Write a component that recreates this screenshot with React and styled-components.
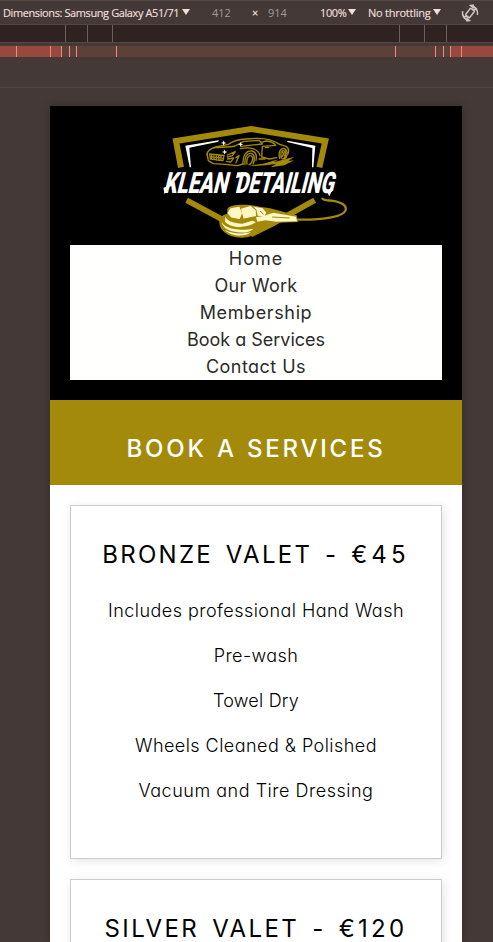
import React from "react";
import styled, { createGlobalStyle } from "styled-components";

const GlobalStyle = createGlobalStyle`
  *, *::before, *::after { box-sizing: border-box; }
  body { margin: 0; background: #443937; overflow: hidden; }
`;

const gold = "#a38a0b";

const Window = styled.div`
  width: 493px;
  height: 942px;
  overflow: hidden;
  display: flex;
  flex-direction: column;
  background: #443937;
  font-family: Inter, sans-serif;
`;

/* ---- device toolbar ---- */

const Toolbar = styled.div`
  flex: none;
  height: 25px;
  display: flex;
  align-items: center;
  padding: 0 0 0 3px;
  border-top: 1px solid #54453f;
  border-bottom: 1px solid #534744;
  background: #443937;
  font: 400 11px/16px "Open Sans", "Noto Sans", sans-serif;
  white-space: nowrap;
`;

const ToolLabel = styled.span`
  flex: none;
  width: ${(p) => p.$width}px;
  color: ${(p) => (p.$muted ? "#a39997" : "#f0dfdc")};
  letter-spacing: ${(p) => p.$spacing || 0}px;
  -webkit-text-stroke: ${(p) => (p.$muted ? 0 : 0.15)}px currentColor;
`;

const Caret = styled.span`
  flex: none;
  width: 8px;
  height: 6px;
  margin: 0 ${(p) => p.$after}px 1px 2px;
  background: #f0dfdc;
  clip-path: polygon(0 0, 100% 0, 50% 100%);
`;

const RotateIcon = styled.svg`
  flex: none;
  width: 18px;
  height: 18px;
  display: block;
`;

/* ---- rulers ---- */

const Ruler = styled.div`
  flex: none;
  display: flex;
  height: 18px;
  background: #2f2221;
  border-bottom: 1px solid #534744;
`;

const RulerCell = styled.div`
  width: ${(p) => p.$width}px;
  height: 17px;
  border-left: ${(p) => (p.$first ? 0 : 1)}px solid #6b5f5c;
`;

const MediaBar = styled.div`
  flex: none;
  display: flex;
  height: 11px;
  margin-top: 3px;
`;

const MediaCell = styled.div`
  width: ${(p) => p.$width}px;
  border-left: ${(p) => (p.$first ? 0 : 1)}px solid #f28b7c;
  background: ${(p) => (p.$strong ? "#97483f" : "#5e403b")};
`;

const Stage = styled.div`
  flex: 1;
  min-height: 0;
  margin-top: 30px;
  border-top: 1px solid #504441;
  padding: 18px 31px 0 50px;
`;

/* ---- previewed page ---- */

const Device = styled.main`
  width: 412px;
  height: 836px;
  overflow: hidden;
  background: #fff;
  box-shadow: 0 0 8px rgba(0, 0, 0, 0.25);
  color: #000;
`;

const SiteHeader = styled.header`
  height: 294px;
  padding: 20px;
  background: #000;
  display: flex;
  flex-direction: column;
`;

const LogoSvg = styled.svg`
  display: block;
  width: 210px;
  height: 119px;
  margin: 0 auto;
  overflow: visible;
`;

const Nav = styled.nav`
  background: #fffffd;
  display: flex;
  flex-direction: column;
`;

const TextLine = styled.span`
  display: block;
  height: 27px;
  line-height: 27px;
  font-size: 18px;
  text-align: center;
  white-space: nowrap;
  font-feature-settings: "cv11";
  letter-spacing: ${(p) => p.$spacing}px;
`;

const NavLink = styled(TextLine)`
  color: #2b2b2b;
  font-weight: 400;
  line-height: 28px;
`;

const Banner = styled.section`
  height: 85px;
  padding-top: 31px;
  background: ${gold};
`;

const Heading = styled.h2`
  margin: 0;
  height: 36px;
  line-height: 36px;
  font-size: 24px;
  font-weight: ${(p) => p.$weight || 400};
  color: ${(p) => p.$color || "#000"};
  letter-spacing: ${(p) => p.$spacing}px;
  word-spacing: ${(p) => p.$gap || 0}px;
  text-align: center;
  white-space: nowrap;
`;

const Price = styled.span`
  letter-spacing: ${(p) => p.$spacing}px;
`;

const Cards = styled.section`
  padding: 20px;
  display: flex;
  flex-direction: column;
  gap: 20px;
`;

const Card = styled.article`
  flex: none;
  height: 354px;
  padding-top: 31px;
  border: 1px solid #ccc;
  background: #fff;
  box-shadow: 2px 2px 10px rgba(0, 0, 0, 0.1);
`;

const Features = styled.div`
  display: flex;
  flex-direction: column;
  gap: 18px;
  margin-top: 24px;
`;

const Feature = styled(TextLine)`
  font-weight: 300;
  line-height: 28px;
`;

const LogoWord = styled.text`
  font-family: Roboto, sans-serif;
  font-weight: 900;
  font-size: 88px;
  fill: #fff;
`;

function Logo() {
  return (
    <LogoSvg viewBox="3 33 630 357" aria-label="Klean Detailing">
      <g fill="none" stroke={gold}>
        <path strokeWidth="18" d="M93 157 L78 78 L303 42 L526 78 L508 157" />
        <path strokeWidth="17" d="M110 256 L224 317 M494 256 L365 328 L302 358" />
      </g>
      <path
        fill="#fff"
        d="M106 92 L206 76 L205 80 L118 98 L123 157 L119 157Z M412 77 L496 92 L490 157 L486 157 L487 99 L412 81Z"
      />
      <g fill="none" stroke={gold} strokeWidth="4" strokeLinecap="round" strokeLinejoin="round">
        <path d="M172 121 C169 110 181 100 198 96 L235 88 C250 78 267 73 287 72 L318 70 C346 69 371 76 389 88 L408 94 C415 98 417 108 414 117" />
        <path d="M190 98 C219 96 236 97 255 93 L281 79 L328 76 L337 87 L273 94" />
        <path d="M334 82 L348 78 C362 79 373 85 377 91 L337 94 L335 126 L358 132 L380 128" />
        <path d="M171 116 L175 137 L190 146 L225 148 L263 152 L279 147" />
        <path d="M179 117 L222 121 L219 137 L181 132Z M185 118 V132 M192 118 V134 M199 119 V135 M206 120 V136 M213 121 V136 M180 125 L220 130" />
        <path d="M232 120 L256 110 L247 122 L232 126 M233 132 L251 129 L243 141 L230 139 M258 128 L267 122 L258 143" />
        <path d="M279 148 C277 119 290 106 306 108 C318 111 321 121 318 136 M285 148 C283 127 291 114 303 115 C315 117 315 135 309 147 M291 147 C288 126 300 117 306 124 C312 132 303 149 297 149" />
        <path d="M389 130 C383 105 397 95 408 104 C415 113 412 127 403 132 M394 129 C389 109 399 102 406 110 C410 117 405 130 398 132 M397 111 L405 124 M406 108 L396 125" />
        <path d="M271 101 C301 95 326 102 330 122 M346 98 L356 97 M327 132 L345 132" />
      </g>
      <path
        fill={gold}
        d="M297 151 C328 149 348 145 369 137 L384 134 L371 142 L433 125 L415 138 L433 136 L403 151 L362 157 L378 147 L345 151 L315 153Z"
      />
      <path
        fill="#fff"
        d="M221 76 l2 6 6 2 -6 2 -2 6 -2 -6 -6 -2 6 -2Z M272 80 l2 6 6 2 -6 2 -2 6 -2 -6 -6 -2 6 -2Z M224 103 l2 6 6 2 -6 2 -2 6 -2 -6 -6 -2 6 -2Z"
      />
      <g transform="translate(40 235) skewX(-14)">
        <LogoWord x="0" y="0" textLength="190" lengthAdjust="spacingAndGlyphs">KLEAN</LogoWord>
        <LogoWord x="214" y="0" textLength="296" lengthAdjust="spacingAndGlyphs">DETAILING</LogoWord>
      </g>
      <path fill="#fff" d="M262 172 L284 172 L280 185 L258 189Z M530 229 L548 222 L538 244Z M44 238 L40 218 L54 214Z" />
      <path
        fill="none"
        stroke={gold}
        strokeWidth="7"
        d="M516 249 C520 257 531 256 544 257 C574 261 590 271 587 285 C582 304 526 315 442 314"
      />
      <path
        fill={gold}
        d="M232 281 C239 270 266 267 302 270 L329 275 L360 280 L440 301 L445 321 L380 323 L344 329 C325 355 304 370 273 368 C232 366 207 344 208 320 C210 303 220 300 232 296Z"
      />
      <g fill="#fff8c4">
        <path d="M242 280 L268 275 L276 295 L269 313 L245 309 L232 294Z M273 281 L301 273 L317 285 L318 303 L281 311 L277 298Z M309 275 L338 280 L349 293 L343 304 L323 302 L319 283Z" />
        <path d="M340 303 L370 293 L413 301 L438 305 L441 319 L380 320 L346 316 L322 320 L318 307Z" />
        <path d="M226 305 C231 318 251 324 277 326 L307 317 L318 322 C290 340 245 341 225 320Z" />
        <path d="M216 321 C224 340 259 349 311 341 C299 351 285 354 264 352 C238 349 217 339 216 321Z M224 344 C247 356 271 359 303 351 C286 367 244 365 224 344Z" />
      </g>
      <path
        fill="none"
        stroke={gold}
        strokeWidth="3"
        d="M243 309 L274 315 L308 307 L321 318 M366 306 L419 309 M330 288 L341 298"
      />
    </LogoSvg>
  );
}

const NAV = [
  ["Home", 1],
  ["Our Work", 0.25],
  ["Membership", 0.62],
  ["Book a Services", 0],
  ["Contact Us", 0.45],
];

const BRONZE = [
  ["Includes professional Hand Wash", 0.46],
  ["Pre-wash", 0.45],
  ["Towel Dry", 0.2],
  ["Wheels Cleaned & Polished", 0.45],
  ["Vacuum and Tire Dressing", 0.52],
];

const RULER = [65, 22, 25, 287, 25, 22, 47];
const MEDIA = [
  [16, true],
  [34, true],
  [11, true],
  [8, false],
  [7, false],
  [40, false],
  [279, false],
  [40, false],
  [8, false],
  [7, false],
  [11, true],
  [32, true],
];

export default function App() {
  return (
    <Window>
      <GlobalStyle />
      <Toolbar>
        <ToolLabel $width={177} $spacing={-0.4}>Dimensions: Samsung Galaxy A51/71</ToolLabel>
        <Caret $after={22} />
        <ToolLabel $width={40} $muted>412</ToolLabel>
        <ToolLabel $width={16}>×</ToolLabel>
        <ToolLabel $width={52} $muted>914</ToolLabel>
        <ToolLabel $width={26} $spacing={-0.4}>100%</ToolLabel>
        <Caret $after={12} />
        <ToolLabel $width={63} $spacing={-0.25}>No throttling</ToolLabel>
        <Caret $after={20} />
        <RotateIcon viewBox="0 0 18 18" fill="none" stroke="#d3c5c2" strokeWidth="1.5">
          <rect x="6.4" y="4.6" width="5.2" height="8.8" rx="1.2" transform="rotate(38 9 9)" />
          <path d="M1.6 7.2 C0.8 12 3.6 16 8.4 16.6 M1.7 12.8 L7.2 12.4 M5.4 14.2 L8.4 16.6 L5.2 17 M16.4 10.8 C17.2 6 14.4 2 9.6 1.4 M16.3 5.2 L10.8 5.6 M12.6 3.8 L9.6 1.4 L12.8 1" />
        </RotateIcon>
      </Toolbar>
      <Ruler>
        {RULER.map((width, i) => (
          <RulerCell key={i} $width={width} $first={i === 0} />
        ))}
      </Ruler>
      <MediaBar>
        {MEDIA.map(([width, strong], i) => (
          <MediaCell key={i} $width={width} $strong={strong} $first={i === 0} />
        ))}
      </MediaBar>
      <Stage>
        <Device>
          <SiteHeader>
            <Logo />
            <Nav>
              {NAV.map(([label, spacing]) => (
                <NavLink key={label} $spacing={spacing}>{label}</NavLink>
              ))}
            </Nav>
          </SiteHeader>
          <Banner>
            <Heading $weight={550} $color="#fff" $spacing={2.8} $gap={1}>BOOK A SERVICES</Heading>
          </Banner>
          <Cards>
            <Card>
              <Heading $spacing={2.3} $gap={3.7}>
                BRONZE VALET - <Price $spacing={4.2}>€45</Price>
              </Heading>
              <Features>
                {BRONZE.map(([label, spacing]) => (
                  <Feature key={label} $spacing={spacing}>{label}</Feature>
                ))}
              </Features>
            </Card>
            <Card>
              <Heading $spacing={2.4} $gap={3.9}>
                SILVER VALET - <Price $spacing={3.3}>€120</Price>
              </Heading>
            </Card>
          </Cards>
        </Device>
      </Stage>
    </Window>
  );
}
